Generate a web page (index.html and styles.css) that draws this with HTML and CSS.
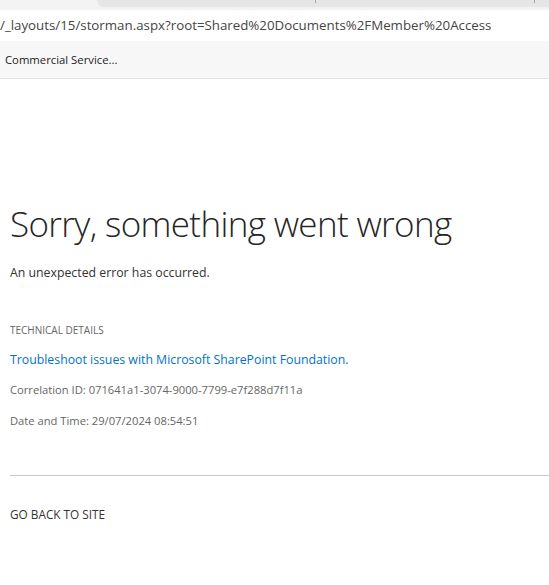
FILE: index.html
```html
<!DOCTYPE html>
<html lang="en">
<head>
<meta charset="utf-8">
<title>Error</title>
<link rel="stylesheet" href="styles.css">
</head>
<body>
<div class="chrome">
  <div class="tabstrip">
    <div class="tabstrip-left"></div>
    <div class="tabstrip-tabs">
      <span class="tab-sep sep1"></span>
      <span class="tab-sep sep2"></span>
    </div>
  </div>
  <div class="tabstrip-gap"></div>
  <div class="addressbar">/_layouts/15/storman.aspx?root=Shared%20Documents%2FMember%20Access</div>
  <div class="bookmarks">Commercial Service...</div>
</div>
<main class="page">
  <h1 class="title">Sorry, something went wrong</h1>
  <p class="subtitle">An unexpected error has occurred.</p>
  <p class="tech-label">TECHNICAL DETAILS</p>
  <a class="tech-link" href="#">Troubleshoot issues with Microsoft SharePoint Foundation.</a>
  <p class="tech-info">Correlation ID: 071641a1-3074-9000-7799-e7f288d7f11a</p>
  <p class="tech-info tech-date">Date and Time: 29/07/2024 08:54:51</p>
  <hr class="divider">
  <a class="back-link" href="#">GO BACK TO SITE</a>
</main>
</body>
</html>
```
FILE: styles.css
```css
html, body {
  margin: 0;
  padding: 0;
  background: #ffffff;
}
body {
  font-family: "Open Sans", "Noto Sans", sans-serif;
  color: #333333;
  overflow: hidden;
}
.chrome {
  display: flex;
  flex-direction: column;
}
.tabstrip {
  display: flex;
  height: 7px;
  background: #f3f3f3;
}
.tabstrip-left {
  width: 97px;
  flex: none;
}
.tabstrip-tabs {
  flex: 1;
  position: relative;
  background: #e6e6e6;
  border-bottom-left-radius: 8px;
}
.tab-sep {
  position: absolute;
  top: 0;
  width: 1px;
  height: 3px;
  background: #a8a8a8;
}
.sep1 { left: 218px; }
.sep2 { left: 437px; }
.tabstrip-gap {
  height: 3px;
  background: #f3f3f3;
}
.addressbar {
  height: 31px;
  line-height: 31px;
  background: #ffffff;
  font-size: 13.3px;
  color: #454545;
  white-space: nowrap;
  overflow: hidden;
}
.bookmarks {
  height: 37px;
  line-height: 37px;
  background: #f7f7f7;
  border-bottom: 1px solid #e3e3e3;
  padding-left: 5px;
  font-size: 11.3px;
  color: #222222;
}
.page {
  display: flex;
  flex-direction: column;
  align-items: flex-start;
  padding: 121px 0 0 10px;
}
.title {
  margin: 0;
  font-size: 35px;
  font-weight: 300;
  line-height: 48px;
  color: #262626;
  letter-spacing: -0.65px;
}
.subtitle {
  margin: 15px 0 0;
  font-size: 12.3px;
  line-height: 20px;
  color: #333333;
}
.tech-label {
  margin: 39px 0 0;
  font-size: 10px;
  line-height: 16px;
  color: #666666;
}
.tech-link {
  margin-top: 12px;
  font-size: 12.3px;
  line-height: 20px;
  color: #0072c6;
  text-decoration: none;
}
.tech-info {
  margin: 10px 0 0;
  font-size: 11.2px;
  line-height: 20px;
  color: #666666;
}
.tech-date {
  margin-top: 11px;
}
.divider {
  align-self: stretch;
  margin: 44px 0 0;
  border: 0;
  border-top: 1px solid #c8c8c8;
  height: 0;
}
.back-link {
  margin-top: 28px;
  font-size: 11.8px;
  line-height: 20px;
  color: #333333;
  text-decoration: none;
}
```
